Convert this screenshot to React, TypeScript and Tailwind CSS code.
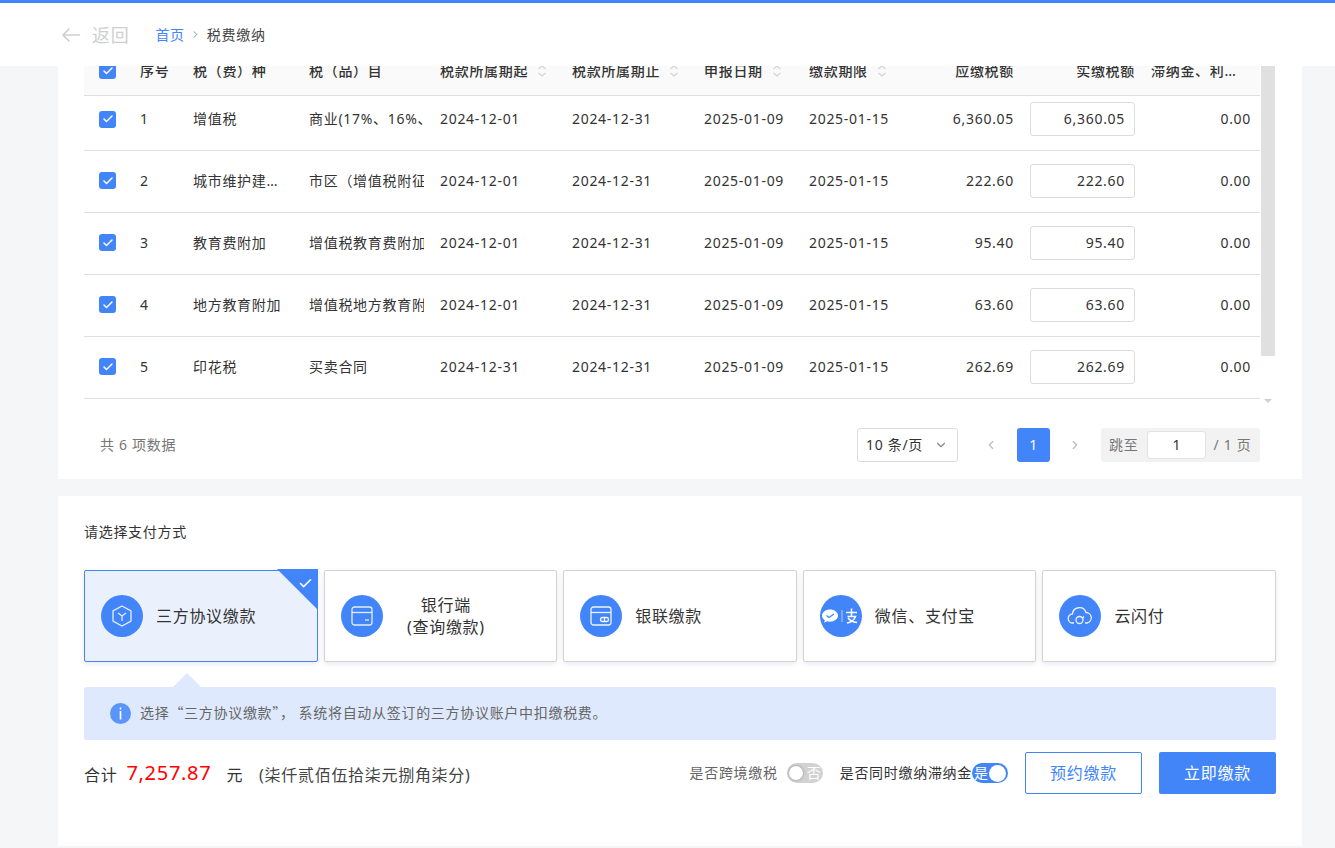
import { Check, ChevronDown, ChevronLeft, ChevronRight } from 'lucide-react'
import type { ReactNode } from 'react'

const COLS = 'grid grid-cols-[56px_53px_116px_131px_132px_132px_105px_100px_121px_121px_109px] items-center'

const rows = [
  { no: 1, tax: '增值税', item: '商业(17%、16%、13%)', start: '2024-12-01', end: '2024-12-31', due: '6,360.05', paid: '6,360.05' },
  { no: 2, tax: '城市维护建设税', item: '市区（增值税附征）', start: '2024-12-01', end: '2024-12-31', due: '222.60', paid: '222.60' },
  { no: 3, tax: '教育费附加', item: '增值税教育费附加', start: '2024-12-01', end: '2024-12-31', due: '95.40', paid: '95.40' },
  { no: 4, tax: '地方教育附加', item: '增值税地方教育附加', start: '2024-12-01', end: '2024-12-31', due: '63.60', paid: '63.60' },
  { no: 5, tax: '印花税', item: '买卖合同', start: '2024-12-31', end: '2024-12-31', due: '262.69', paid: '262.69' },
]

function CheckBox() {
  return (
    <span className="flex h-[17px] w-[17px] items-center justify-center rounded-[3px] bg-[#4285f8] text-white">
      <Check size={12} strokeWidth={3} />
    </span>
  )
}

// 表头排序小箭头
function SortIcon() {
  return (
    <svg width="12" height="14" viewBox="0 0 12 14" fill="none" stroke="#d4d4d4" strokeWidth="1.2" className="ml-[8px] inline-block shrink-0">
      <path d="M2.5 5 6 2l3.5 3" />
      <path d="M2.5 9 6 12l3.5-3" />
    </svg>
  )
}

function TableHead() {
  return (
    <div className="h-[30px] overflow-hidden border-b border-[#dfdfdf] bg-[#fafafa] pb-[20px] text-sm font-medium text-[#333]">
      <div className={COLS + ' h-[9px] grid-rows-[9px]'}>
        <div className="pl-[15px]"><CheckBox /></div>
        <div>序号</div>
        <div>税（费）种</div>
        <div>税（品）目</div>
        <div className="flex items-center">税款所属期起<SortIcon /></div>
        <div className="flex items-center">税款所属期止<SortIcon /></div>
        <div className="flex items-center">申报日期<SortIcon /></div>
        <div className="flex items-center">缴款期限<SortIcon /></div>
        <div className="pr-4 text-right">应缴税额</div>
        <div className="flex">
          <div className="w-[105px] text-right">实缴税额</div>
        </div>
        <div className="truncate pr-[18px]">滞纳金、利息、罚款</div>
      </div>
    </div>
  )
}

function TableRows() {
  return (
    <div>
      {rows.map((r, i) => (
        <div key={r.no} className={(i === 0 ? 'h-[55px] pb-[8px] ' : 'h-[62px] pb-[2px] ') + 'border-b border-[#dfdfdf] text-sm text-[#333]'}>
          <div className={COLS + ' h-full'}>
            <div className="pl-[15px]"><CheckBox /></div>
            <div>{r.no}</div>
            <div className="truncate pr-[27px]">{r.tax}</div>
            <div className="w-[115px] overflow-hidden whitespace-nowrap">{r.item}</div>
            <div>{r.start}</div>
            <div>{r.end}</div>
            <div>2025-01-09</div>
            <div>2025-01-15</div>
            <div className="pr-4 text-right">{r.due}</div>
            <div>
              <div className="flex h-[34px] w-[105px] items-center justify-end rounded-[3px] border border-[#dcdcdc] bg-white pr-[9px]">{r.paid}</div>
            </div>
            <div className="pr-[9px] text-right">0.00</div>
          </div>
        </div>
      ))}
    </div>
  )
}

function Pagination() {
  return (
    <div className="flex h-[81px] items-center pl-4 pt-[3px] text-sm text-[#777]">
      <div className="flex-1">共 6 项数据</div>
      <div className="flex h-[34px] w-[101px] items-center justify-between rounded-[3px] border border-[#dcdcdc] pl-2 pr-[9px] text-[#333]">
        10 条/页
        <ChevronDown size={14} className="text-[#888]" />
      </div>
      <ChevronLeft size={14} className="ml-[26px] text-[#bbb]" />
      <div className="ml-[19px] flex h-[34px] w-[33px] items-center justify-center rounded-[3px] bg-[#4285f8] text-white">1</div>
      <ChevronRight size={14} className="ml-[18px] text-[#bbb]" />
      <div className="ml-[19px] flex h-[34px] w-[159px] items-center rounded-[3px] bg-[#f2f2f2] pl-2 text-[#777]">
        跳至
        <div className="ml-[9px] flex h-[28px] w-[59px] items-center justify-center rounded-[3px] border border-[#e2e2e2] bg-white text-[#333]">1</div>
        <span className="ml-[7px]">/ 1 页</span>
      </div>
    </div>
  )
}

function IconCircle({ children }: { children: ReactNode }) {
  return (
    <span className="flex h-[42px] w-[42px] shrink-0 items-center justify-center rounded-full bg-[#4285f8]">
      {children}
    </span>
  )
}

const CubeIcon = (
  <svg width="22" height="24" viewBox="0 0 22 24" fill="none" stroke="#fff" strokeOpacity=".85" strokeWidth="1.3">
    <path d="M11 2 20 7v10l-9 5-9-5V7z" />
    <path d="M7 9l4 3 4-3M11 12v5" />
  </svg>
)

const CardIcon = (
  <svg width="22" height="20" viewBox="0 0 22 20" fill="none" stroke="#fff" strokeOpacity=".85" strokeWidth="1.3">
    <rect x="1" y="1" width="20" height="18" rx="2.5" />
    <path d="M1 6.5h20" />
    <path d="M14 14h4" />
  </svg>
)

const UnionIcon = (
  <svg width="22" height="20" viewBox="0 0 22 20" fill="none" stroke="#fff" strokeOpacity=".9" strokeWidth="1.3">
    <rect x="1" y="1" width="20" height="18" rx="2.5" />
    <path d="M1 6.5h20" />
    <rect x="10.5" y="11.5" width="8" height="4" rx="2" />
    <path d="M14.5 11.500v4" />
  </svg>
)

const PayIcon = (
  <svg width="42" height="20" viewBox="0 0 42 20" fill="none">
    <path d="M10 3.5c-4.4 0-8 2.7-8 6.1 0 1.9 1.1 3.6 2.8 4.7l-.7 2.4 2.8-1.4c1 .3 2 .4 3.1.4 4.4 0 8-2.7 8-6.1s-3.6-6.1-8-6.1z" fill="#fff" />
    <path d="M6.5 9.500l2.5 2 5-3.500" stroke="#4285f8" strokeWidth="1.3" />
    <path d="M22 4v12" stroke="#fff" strokeOpacity=".6" />
    <path d="M26 6.500h11M31.500 2.500v8M27.500 10.500h8c-1.500 4-5 6-8.500 6.500M28 12c2 2.500 5.500 4 9 4.500" stroke="#fff" strokeWidth="1.5" />
  </svg>
)

const CloudIcon = (
  <svg width="26" height="22" viewBox="0 0 26 22" fill="none" stroke="#fff" strokeOpacity=".9" strokeWidth="1.3">
    <path d="M7 18H6a4.5 4.5 0 0 1-.6-9A7 7 0 0 1 19 7.500 5.300 5.300 0 0 1 20 18h-2" />
    <circle cx="12.5" cy="15" r="3.5" />
    <path d="M17 11.500l-2 2" />
  </svg>
)

const payments: { label: ReactNode; icon: ReactNode; centered?: boolean; active?: boolean }[] = [
  { label: '三方协议缴款', icon: CubeIcon, active: true },
  { label: <>银行端<br />(查询缴款)</>, icon: CardIcon, centered: true },
  { label: '银联缴款', icon: UnionIcon },
  { label: '微信、支付宝', icon: PayIcon },
  { label: '云闪付', icon: CloudIcon },
]

function PayCard({ label, icon, centered, active }: (typeof payments)[number]) {
  return (
    <div className={(active ? 'border-[#4285f8] bg-[#ebf1fc] ' : 'border-[#d3d3d3] bg-white ') + 'relative flex h-[92px] flex-1 items-center rounded-[2px] border pl-4 text-base leading-[22px] text-[#333] shadow-[0_2px_5px_rgba(60,80,140,0.12)]'}>
      <IconCircle>{icon}</IconCircle>
      <div className={centered ? 'flex-1 pr-[47px] text-center' : 'ml-[13px]'}>{label}</div>
      {active && (
        <>
          <span className="absolute -right-px -top-[2px] h-0 w-0 border-l-[41px] border-t-[41px] border-l-transparent border-t-[#4285f8]" />
          <Check size={15} strokeWidth={2.5} className="absolute right-[4px] top-[5px] text-white" />
        </>
      )}
    </div>
  )
}

function Toggle({ on, text }: { on?: boolean; text: string }) {
  return (
    <span className={(on ? 'bg-[#4285f8] ' : 'bg-[#d2d2d2] ') + 'flex h-[20px] w-[36px] items-center justify-between rounded-full px-[2px] text-sm leading-none tracking-normal text-white'}>
      {on ? (
        <>
          <span>{text}</span>
          <span className="h-[17px] w-[17px] rounded-full bg-white" />
        </>
      ) : (
        <>
          <span className="h-[14px] w-[14px] rounded-full bg-white shadow-[0_0_3px_rgba(0,0,0,0.35)]" />
          <span>{text}</span>
        </>
      )}
    </span>
  )
}

export default function App() {
  return (
    <div className="h-[848px] overflow-hidden bg-[#f5f6f8] font-['Noto_Sans','Noto_Sans_CJK_SC',sans-serif] tracking-[0.7px]">
      {/* 顶部导航 */}
      <div className="flex h-[66px] items-center border-t-[3px] border-[#4285f8] bg-white pl-[61px]">
        <svg width="20" height="16" viewBox="0 0 20 16" fill="none" stroke="#cfcfcf" strokeWidth="1.6">
          <path d="M19 8H2M8.5 1.5 2 8l6.5 6.500" />
        </svg>
        <span className="ml-[11px] text-lg text-[#cfcfcf]">返回</span>
        <span className="ml-[26px] text-sm text-[#4285f8]">首页</span>
        <ChevronRight size={11} className="mx-[5px] text-[#888]" />
        <span className="ml-px text-sm text-[#444]">税费缴纳</span>
      </div>

      <div className="ml-[58px] w-[1244px]">
        {/* 税费列表 */}
        <div className="h-[413px] bg-white pl-[26px] pr-[27px]">
          <div className="flex">
            <div className="w-[1176px]">
              <TableHead />
              <TableRows />
            </div>
            <div className="ml-px flex w-[14px] flex-col items-center">
              <div className="h-[290px] w-full bg-[#e0e0e0]" />
              <div className="mt-[43px] h-0 w-0 border-x-[4px] border-t-[4px] border-x-transparent border-t-[#d0d0d0]" />
            </div>
          </div>
          <div className="w-[1176px]">
            <Pagination />
          </div>
        </div>

        {/* 支付方式 */}
        <div className="mt-[17px] h-[350px] bg-white px-[26px] pt-[26px]">
          <div className="text-sm leading-5 text-[#333]">请选择支付方式</div>
          <div className="mt-[28px] flex gap-[6px]">
            {payments.map((p, i) => <PayCard key={i} {...p} />)}
          </div>

          <div className="relative mt-[25px] flex h-[53px] items-center rounded-[2px] bg-[#dfe9fd] pl-[26px] text-sm text-[#666]">
            <span className="absolute -top-[14px] left-[89px] h-0 w-0 border-x-[14px] border-b-[14px] border-x-transparent border-b-[#dfe9fd]" />
            <svg width="21" height="21" viewBox="0 0 21 21">
              <circle cx="10.5" cy="10.5" r="10.5" fill="#5b95f9" />
              <rect x="9.7" y="4.5" width="1.6" height="2" fill="#fff" />
              <rect x="9.7" y="8" width="1.6" height="8.5" fill="#fff" />
            </svg>
            <span className="ml-[9px] pb-[3px] font-['Noto_Sans_CJK_SC',sans-serif]">选择“三方协议缴款”， 系统将自动从签订的三方协议账户中扣缴税费。</span>
          </div>

          <div className="mt-[12px] flex h-[42px] items-center">
            <span className="pt-[3px] text-base text-[#333]">合计</span>
            <span className="ml-[9px] text-[20px] text-[#ff0000]">7,257.87</span>
            <span className="ml-[15px] pt-[3px] text-base text-[#333]">元</span>
            <span className="ml-[16px] pt-[3px] text-base text-[#444]">(柒仟贰佰伍拾柒元捌角柒分)</span>
            <span className="ml-auto text-sm text-[#666]">是否跨境缴税</span>
            <span className="ml-[9px]"><Toggle text="否" /></span>
            <span className="ml-[17px] text-sm text-[#333]">是否同时缴纳滞纳金</span>
            <Toggle on text="是" />
            <button className="ml-[17px] h-[42px] w-[117px] rounded-[2px] border border-[#4285f8] bg-white text-base text-[#4285f8]">预约缴款</button>
            <button className="ml-[17px] h-[42px] w-[117px] rounded-[2px] bg-[#4285f8] text-base text-white">立即缴款</button>
          </div>
        </div>
      </div>
    </div>
  )
}
